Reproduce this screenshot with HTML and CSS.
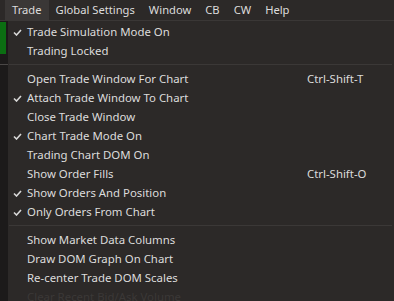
FILE: index.html
```html
<!DOCTYPE html>
<html lang="en">
  <head>
    <meta charset="UTF-8" />
    <title>Trade Menu</title>
    <link rel="stylesheet" href="styles.css">
  </head>
  <body>
    <div class="menubar">
      <span class="menu-title active">Trade</span>
      <span class="menu-title">Global Settings</span>
      <span class="menu-title">Window</span>
      <span class="menu-title">CB</span>
      <span class="menu-title">CW</span>
      <span class="menu-title">Help</span>
    </div>

    <div class="workspace">
      <div class="side-strip">
        <div class="green-block"></div>
        <div class="strip-line"></div>
      </div>

      <div class="dropdown">
        <div class="item checked"><span class="check"></span><span class="label">Trade Simulation Mode On</span><span class="key"></span></div>
        <div class="item"><span class="check"></span><span class="label">Trading Locked</span><span class="key"></span></div>
        <div class="separator"></div>
        <div class="item"><span class="check"></span><span class="label">Open Trade Window For Chart</span><span class="key">Ctrl-Shift-T</span></div>
        <div class="item checked"><span class="check"></span><span class="label">Attach Trade Window To Chart</span><span class="key"></span></div>
        <div class="item"><span class="check"></span><span class="label">Close Trade Window</span><span class="key"></span></div>
        <div class="item checked"><span class="check"></span><span class="label">Chart Trade Mode On</span><span class="key"></span></div>
        <div class="item"><span class="check"></span><span class="label">Trading Chart DOM On</span><span class="key"></span></div>
        <div class="item"><span class="check"></span><span class="label">Show Order Fills</span><span class="key">Ctrl-Shift-O</span></div>
        <div class="item checked"><span class="check"></span><span class="label">Show Orders And Position</span><span class="key"></span></div>
        <div class="item checked"><span class="check"></span><span class="label">Only Orders From Chart</span><span class="key"></span></div>
        <div class="separator"></div>
        <div class="item"><span class="check"></span><span class="label">Show Market Data Columns</span><span class="key"></span></div>
        <div class="item"><span class="check"></span><span class="label">Draw DOM Graph On Chart</span><span class="key"></span></div>
        <div class="item"><span class="check"></span><span class="label">Re-center Trade DOM Scales</span><span class="key"></span></div>
        <div class="item disabled"><span class="check"></span><span class="label">Clear Recent Bid/Ask Volume</span><span class="key"></span></div>
      </div>
    </div>

    <script>
      // put the check glyph into every checked row
      const tick =
        '<svg width="9" height="7" viewBox="0 0 9 7"><path d="M1 3.5 L3.5 6 L8 1" fill="none" stroke="#d8d8d8" stroke-width="1.6"/></svg>';
      document.querySelectorAll(".item.checked .check").forEach((el) => {
        el.innerHTML = tick;
      });
    </script>
  </body>
</html>
```

FILE: styles.css
```css
body {
  margin: 0;
  background: #2c2928;
  font-family: "Noto Sans", "Open Sans", sans-serif;
  font-size: 11.2px;
  color: #dcdcdc;
  height: 301px;
  overflow: hidden;
}
.menubar {
  display: flex;
  height: 20px;
  padding-left: 5px;
  border-bottom: 1px solid #3a3736;
  background: #2c2928;
}
.menu-title {
  padding: 0 7px;
  line-height: 20px;
}
.menu-title.active {
  background: #3a3736;
}
.workspace {
  display: flex;
}
.side-strip {
  width: 8px;
  background: #1c1a1a;
  padding-top: 1px;
}
.green-block {
  width: 6px;
  height: 32px;
  background: #0b6e12;
}
.strip-line {
  margin-top: 10px;
  height: 1px;
  background: #4a4746;
}
.dropdown {
  flex: 1;
  padding-top: 2px;
  background: #2c2928;
  font-size: 11.4px;
}
.item {
  display: grid;
  grid-template-columns: 19px 280px auto;
  height: 19px;
  line-height: 18px;
  white-space: nowrap;
}
.check {
  display: flex;
  align-items: center;
  justify-content: center;
}
.disabled {
  color: #3b3837;
}
.separator {
  height: 1px;
  margin: 3px 2px 5px 1px;
  background: #3b3837;
}
```
